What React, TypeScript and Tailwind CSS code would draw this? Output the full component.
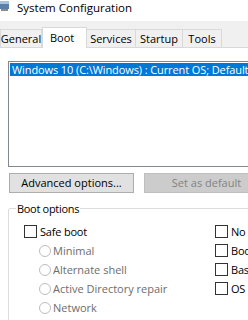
import React from "react";

const font = { fontFamily: '"Open Sans", "Noto Sans", "Liberation Sans", sans-serif' };

function Check({ label }: { label: string }) {
  return (
    <div className="flex items-center h-[19px] whitespace-nowrap">
      <div className="w-[13px] h-[13px] border border-[#333333] bg-white shrink-0" />
      <span className="ml-[3px] text-[11px] text-black leading-none tracking-[-0.2px]">{label}</span>
    </div>
  );
}

function Radio({ label }: { label: string }) {
  return (
    <div className="flex items-center h-[19px] whitespace-nowrap">
      <div className="w-[12px] h-[12px] rounded-full border border-[#bcbcbc] bg-white shrink-0" />
      <span className="ml-[2px] text-[11px] text-[#6d6d6d] leading-none">{label}</span>
    </div>
  );
}

export default function App() {
  const tabs = [
    { name: "General", w: 42 },
    { name: "Boot", w: 45, sel: true },
    { name: "Services", w: 50 },
    { name: "Startup", w: 48 },
    { name: "Tools", w: 40 },
  ];
  return (
    <div className="w-[248px] h-[320px] overflow-hidden bg-[#f0f0f0] flex flex-col" style={font}>
      {/* title bar */}
      <div className="h-[21px] bg-white flex items-start shrink-0">
        <svg width="10" height="12" viewBox="0 0 10 12" className="mt-[1px] shrink-0">
          <rect x="0" y="0" width="9" height="8" fill="#5a7fa8" />
          <rect x="0" y="0" width="9" height="3" fill="#a8c3e0" />
          <rect x="1" y="8" width="7" height="2" fill="#8a8a8a" />
        </svg>
        <span className="ml-[7px] text-[11.5px] leading-[15px] text-black whitespace-nowrap">System Configuration</span>
      </div>
      {/* tabs */}
      <div className="h-[26px] flex items-end shrink-0 relative z-10">
        {tabs.map((t) =>
          t.sel ? (
            <div
              key={t.name}
              className="h-[21px] bg-white border border-b-0 border-[#d9d9d9] flex items-start justify-start pl-[7px] text-[11px] text-black -mb-[1px] pt-[2px] shrink-0"
              style={{ width: t.w }}
            >
              {t.name}
            </div>
          ) : (
            <div
              key={t.name}
              className="h-[18px] bg-[#f0f0f0] border border-b-0 border-[#d9d9d9] -ml-[1px] first:ml-0 flex items-center justify-center text-[11px] text-black shrink-0 pt-[1px]"
              style={{ width: t.w }}
            >
              {t.name}
            </div>
          )
        )}
      </div>
      {/* panel */}
      <div className="flex-1 bg-white border-t border-[#d9d9d9] pl-[8px] pt-[13px]">
        <div className="w-[270px] h-[106px] border border-[#828790] bg-white p-[1px]">
          <div className="h-[13px] bg-[#0078d7] text-white text-[11px] leading-[13px] pl-[2px] whitespace-nowrap tracking-[-0.1px]">
            Windows 10 (C:\Windows) : Current OS; Default OS
          </div>
        </div>
        <div className="flex gap-[10px] mt-[6px] ml-[1px]">
          <div className="w-[125px] h-[20px] bg-[#e1e1e1] border border-[#adadad] flex items-center justify-center text-[11px] text-black shrink-0 whitespace-nowrap">
            Advanced options...
          </div>
          <div className="w-[125px] h-[20px] bg-[#cccccc] border border-[#bfbfbf] flex items-center justify-center text-[11px] text-[#838383] shrink-0 whitespace-nowrap">
            Set as default
          </div>
        </div>
        <div className="relative mt-[15px] w-[270px] h-[140px] border border-[#dcdcdc] rounded-[2px]">
          <span className="absolute -top-[8px] left-[7px] bg-white px-[1px] text-[11px] leading-[15px] text-black whitespace-nowrap tracking-[-0.3px]">
            Boot options
          </span>
          <div className="flex pt-[13px]">
            <div className="pl-[15px] w-[206px] shrink-0">
              <Check label="Safe boot" />
              <div className="pl-[15px]">
                <Radio label="Minimal" />
                <Radio label="Alternate shell" />
                <Radio label="Active Directory repair" />
                <Radio label="Network" />
              </div>
            </div>
            <div className="shrink-0">
              <Check label="No GUI boot" />
              <Check label="Boot log" />
              <Check label="Base video" />
              <Check label="OS boot information" />
            </div>
          </div>
        </div>
      </div>
    </div>
  );
}
